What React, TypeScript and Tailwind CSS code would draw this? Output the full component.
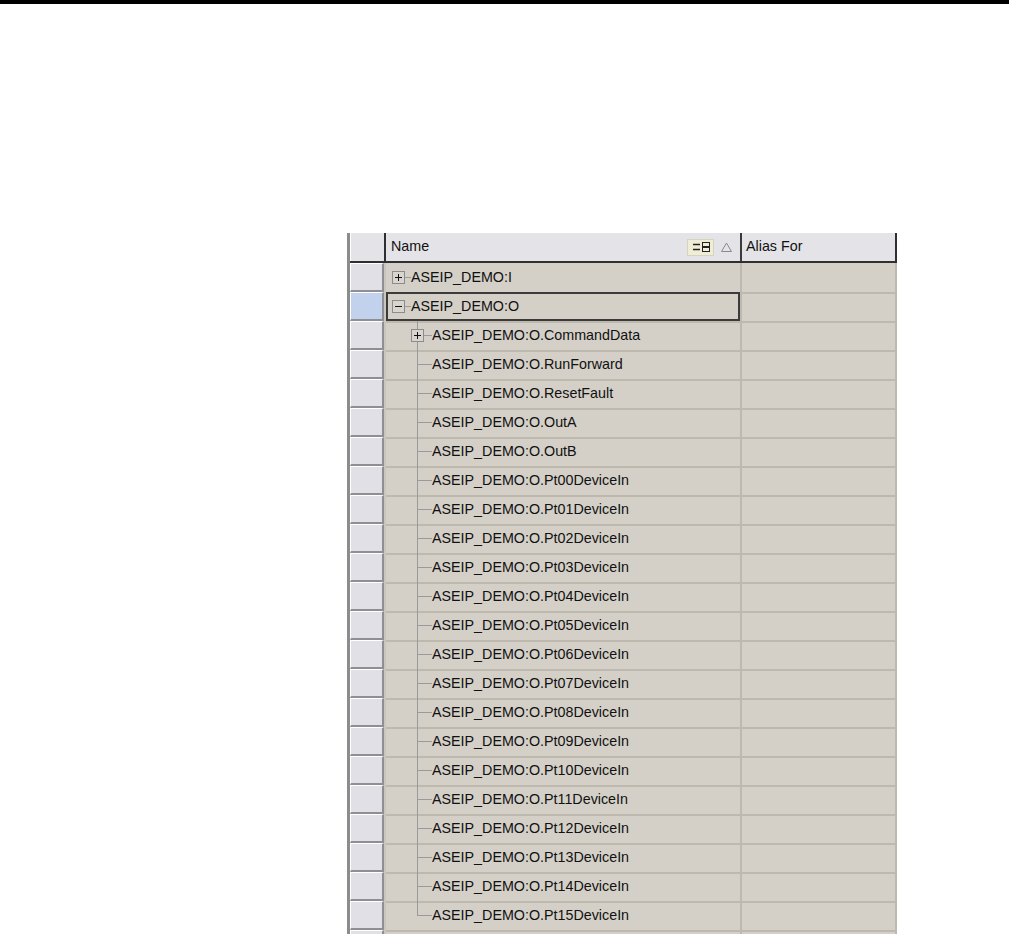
import React from 'react';

type TreeKind = 'rootPlus' | 'rootMinus' | 'childPlus' | 'child' | 'childLast';

type Row = { name: string; tree: TreeKind; selected?: boolean };

const pts = Array.from({ length: 16 }, (_, i) => `ASEIP_DEMO:O.Pt${String(i).padStart(2, '0')}DeviceIn`);

const rows: Row[] = [
  { name: 'ASEIP_DEMO:I', tree: 'rootPlus' },
  { name: 'ASEIP_DEMO:O', tree: 'rootMinus', selected: true },
  { name: 'ASEIP_DEMO:O.CommandData', tree: 'childPlus' },
  { name: 'ASEIP_DEMO:O.RunForward', tree: 'child' },
  { name: 'ASEIP_DEMO:O.ResetFault', tree: 'child' },
  { name: 'ASEIP_DEMO:O.OutA', tree: 'child' },
  { name: 'ASEIP_DEMO:O.OutB', tree: 'child' },
  ...pts.map((name, i) => ({ name, tree: (i === 15 ? 'childLast' : 'child') as TreeKind })),
];

const LINE = '#9a9a9a';

// expander box with + or -
const Box: React.FC<{ x: number; plus: boolean }> = ({ x, plus }) => (
  <g>
    <rect x={x + 0.5} y={8.5} width={12} height={12} fill="#d8d5ce" stroke="#8c8c8c" />
    <line x1={x + 3} y1={14.5} x2={x + 10} y2={14.5} stroke="#111" />
    {plus && <line x1={x + 6.5} y1={11} x2={x + 6.5} y2={18} stroke="#111" />}
  </g>
);

const Tree: React.FC<{ kind: TreeKind }> = ({ kind }) => {
  if (kind === 'rootPlus' || kind === 'rootMinus') {
    return (
      <svg width="25" height="29" className="shrink-0">
        <Box x={6} plus={kind === 'rootPlus'} />
        <line x1={19} y1={14.5} x2={25} y2={14.5} stroke={LINE} />
      </svg>
    );
  }
  return (
    <svg width="46" height="29" className="shrink-0">
      <line x1={31.5} y1={0} x2={31.5} y2={kind === 'childLast' ? 15 : 29} stroke={LINE} />
      {kind === 'childPlus' ? (
        <>
          <Box x={25} plus />
          <line x1={38} y1={14.5} x2={46} y2={14.5} stroke={LINE} />
        </>
      ) : (
        <line x1={31.5} y1={14.5} x2={46} y2={14.5} stroke={LINE} />
      )}
    </svg>
  );
};

const RowHeader: React.FC<{ selected?: boolean }> = ({ selected }) => (
  <div className="border-r-2 border-b-2 border-[#c9c6bf] bg-[#d4d0c8]">
    <div
      className={`h-full border-t border-l border-white border-r-2 border-b-2 border-r-[#8f8f93] border-b-[#8f8f93] ${
        selected ? 'bg-[#c3d2ec]' : 'bg-[#e1e0e6]'
      }`}
    />
  </div>
);

export default function App() {
  return (
    <div className="h-[934px] overflow-hidden bg-white" style={{ fontFamily: '"Liberation Sans", Arial, sans-serif' }}>
      <div className="h-[4px] bg-black" />
      <div className="pt-[229px] pl-[347px]">
        <div className="w-[550px] border-l-[3px] border-[#8c8c8c] text-[14.3px] text-[#111]">
          {/* header */}
          <div className="grid h-[30px] grid-cols-[36px_356px_155px] border-b-2 border-[#2f2f2f] bg-[#e4e4e8]">
            <div className="border-r-2 border-[#2f2f2f] border-l border-l-white" />
            <div className="flex items-center border-r-2 border-[#3a3a3a] pl-[5px]">
              <span>Name</span>
              <div className="ml-auto flex items-center">
                <div className="flex h-[17px] w-[27px] items-center justify-center border border-[#d6d3bf] bg-[#efedd6]">
                  <svg width="20" height="12">
                    <line x1="2" y1="3.5" x2="9" y2="3.5" stroke="#222" strokeWidth="1.5" />
                    <line x1="2" y1="8.5" x2="9" y2="8.5" stroke="#222" strokeWidth="1.5" />
                    <rect x="11.5" y="1.5" width="7" height="4" fill="none" stroke="#222" />
                    <rect x="11.5" y="6.5" width="7" height="4" fill="none" stroke="#222" />
                  </svg>
                </div>
                <svg width="24" height="14" className="ml-[2px]">
                  <path d="M5.5 11.5 L10.5 3 L15.5 11.5 Z" fill="none" stroke="#8a8a8a" />
                </svg>
              </div>
            </div>
            <div className="flex items-center border-r-2 border-[#2f2f2f] pl-[4px]">Alias For</div>
          </div>
          {/* rows */}
          {rows.map((r) => (
            <div key={r.name} className="grid h-[29px] grid-cols-[36px_356px_155px] bg-[#d4d0c8]">
              <RowHeader selected={r.selected} />
              <div className="border-r-2 border-b-2 border-[#bdb9af]">
                <div
                  className={`flex h-full items-center ${
                    r.selected ? 'shadow-[inset_0_0_0_2px_#3b3b3b]' : ''
                  }`}
                >
                  <Tree kind={r.tree} />
                  <span className="whitespace-nowrap">{r.name}</span>
                </div>
              </div>
              <div className="border-r-2 border-b-2 border-[#bdb9af]" />
            </div>
          ))}
          <div className="grid h-[29px] grid-cols-[36px_356px_155px] bg-[#d4d0c8]">
            <RowHeader />
            <div className="border-r-2 border-b-2 border-[#bdb9af]" />
            <div className="border-r-2 border-b-2 border-[#bdb9af]" />
          </div>
        </div>
      </div>
    </div>
  );
}
